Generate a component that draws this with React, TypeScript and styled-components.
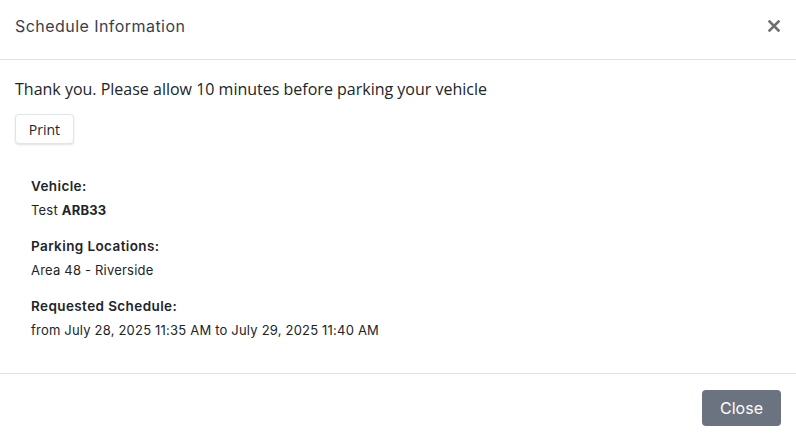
import styled, { createGlobalStyle } from 'styled-components';

const GlobalStyle = createGlobalStyle`
  html, body {
    margin: 0;
    padding: 0;
    background: #fff;
  }
  * {
    box-sizing: border-box;
  }
`;

const details = [
  { label: 'Vehicle:', value: 'Test', strong: 'ARB33' },
  { label: 'Parking Locations:', value: 'Area 48 - Riverside' },
  {
    label: 'Requested Schedule:',
    value: 'from July 28, 2025 11:35 AM to July 29, 2025 11:40 AM',
  },
];

const App = () => {
  return (
    <>
      <GlobalStyle />
      <Modal>
        <Header>
          <Title>Schedule Information</Title>
          <CloseIcon aria-label="Close">
            <svg width="12" height="12" viewBox="0 0 12 12">
              <path
                d="M1.5 1.5 L10.5 10.5 M10.5 1.5 L1.5 10.5"
                stroke="#6f6f6f"
                strokeWidth="2.6"
                strokeLinecap="square"
              />
            </svg>
          </CloseIcon>
        </Header>
        <Body>
          <Message>Thank you. Please allow 10 minutes before parking your vehicle</Message>
          <PrintButton>Print</PrintButton>
          <Details>
            {details.map((item) => (
              <Field key={item.label}>
                <Label>{item.label}</Label>
                <Value>
                  {item.value}
                  {item.strong && <> <b>{item.strong}</b></>}
                </Value>
              </Field>
            ))}
          </Details>
        </Body>
        <Footer>
          <CloseButton>Close</CloseButton>
        </Footer>
      </Modal>
    </>
  );
};

const Modal = styled.div`
  width: 796px;
  height: 438px;
  background: #fff;
  display: flex;
  flex-direction: column;
  font-family: Inter, 'Noto Sans', sans-serif;
  color: #212529;
`;

const Header = styled.div`
  height: 60px;
  padding: 0 16px 0 15px;
  display: flex;
  align-items: center;
  justify-content: space-between;
  border-bottom: 1px solid #dee2e6;
`;

const Title = styled.h5`
  margin: 0 0 7px;
  font-size: 16px;
  font-weight: 400;
  letter-spacing: 0.45px;
  color: #3a3f4b;
`;

const CloseIcon = styled.span`
  display: flex;
  margin-bottom: 7px;
`;

const Body = styled.div`
  flex: 1;
  padding: 18px 15px 0;
`;

const Message = styled.p`
  margin: 0;
  font-family: 'Open Sans', sans-serif;
  font-size: 16px;
  line-height: 22px;
  color: #212529;
`;

const PrintButton = styled.button`
  margin-top: 14px;
  height: 30px;
  width: 59px;
  padding: 0;
  background: #fff;
  border: 1px solid #e2e4e8;
  border-radius: 4px;
  box-shadow: 0 1px 2px rgba(0, 0, 0, 0.12);
  font-family: 'Open Sans', sans-serif;
  font-size: 14px;
  color: #212529;
`;

const Details = styled.div`
  padding: 32px 16px 0;
  display: flex;
  flex-direction: column;
  gap: 16px;
`;

const Field = styled.div`
  display: flex;
  flex-direction: column;
  gap: 4px;
`;

const Label = styled.div`
  font-size: 13.5px;
  font-weight: 600;
  line-height: 20px;
  letter-spacing: 0.4px;
  color: #212529;
`;

const Value = styled.div`
  font-size: 13px;
  line-height: 20px;
  letter-spacing: 0.2px;
  color: #212529;

  b {
    font-weight: 700;
  }
`;

const Footer = styled.div`
  height: 65px;
  border-top: 1px solid #dee2e6;
  display: flex;
  align-items: flex-start;
  justify-content: flex-end;
  padding: 16px 15px 0;
`;

const CloseButton = styled.button`
  width: 79px;
  height: 36px;
  background: #6c7380;
  border: none;
  border-radius: 4px;
  color: #fff;
  font-family: Inter, 'Noto Sans', sans-serif;
  font-size: 16px;
`;

export default App;
